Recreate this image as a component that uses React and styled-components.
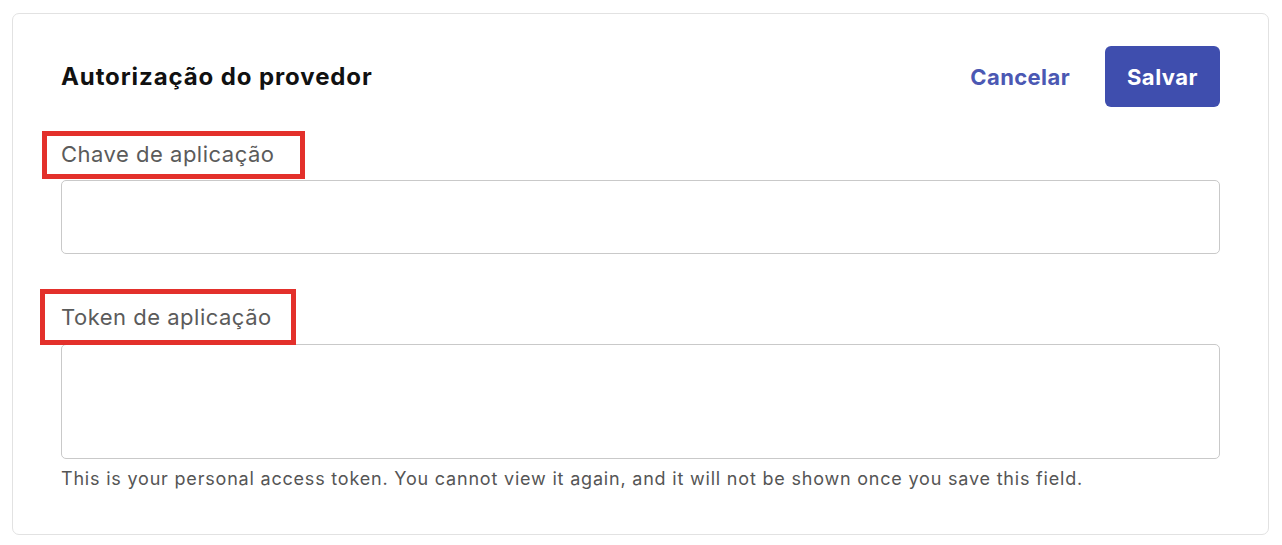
import React from "react";
import styled, { createGlobalStyle } from "styled-components";

const Global = createGlobalStyle`
  html, body { margin: 0; padding: 0; background: #ffffff; }
  body { font-family: Inter, "Liberation Sans", Arial, sans-serif; }
  * { box-sizing: border-box; }
`;

const Page = styled.div`
  padding: 13px 13px 10px 12px;
  width: 1282px;
`;

const Card = styled.section`
  border: 1px solid #e2e2e2;
  border-radius: 7px;
  padding: 32px 48px 46px 48px;
  height: 522px;
`;

const Header = styled.div`
  display: flex;
  align-items: center;
  justify-content: space-between;
`;

const Title = styled.h2`
  margin: 0;
  font-size: 24px;
  font-weight: 700;
  color: #111;
  letter-spacing: 0.9px;
`;

const Actions = styled.div`
  display: flex;
  align-items: center;
  gap: 35px;
`;

const LinkButton = styled.button`
  border: none;
  background: none;
  padding: 0;
  font-family: inherit;
  font-size: 22px;
  font-weight: 700;
  letter-spacing: 0.4px;
  color: #4b58b3;
  cursor: pointer;
`;

const PrimaryButton = styled.button`
  border: none;
  background: #3f4eae;
  color: #fff;
  font-family: inherit;
  font-size: 22px;
  font-weight: 700;
  letter-spacing: 0.5px;
  width: 115px;
  height: 61px;
  border-radius: 6px;
  cursor: pointer;
`;

const Field = styled.div`
  display: flex;
  flex-direction: column;
  margin-top: ${(p) => p.$top}px;
`;

const Label = styled.label`
  position: relative;
  align-self: flex-start;
  font-size: 22px;
  letter-spacing: 0.5px;
  color: #5b5b5b;
  line-height: 24px;
  margin-bottom: ${(p) => p.$gap}px;

  &::after {
    content: "";
    position: absolute;
    left: ${(p) => p.$box.l}px;
    top: ${(p) => p.$box.t}px;
    right: ${(p) => p.$box.r}px;
    bottom: ${(p) => p.$box.b}px;
    border: 5px solid #e3302b;
    pointer-events: none;
  }
`;

const Input = styled.div`
  height: ${(p) => p.$h}px;
  border: 1px solid #c9c9c9;
  border-radius: 5px;
  background: #fff;
`;

const Help = styled.p`
  margin: 9px 0 0 0;
  font-size: 18px;
  line-height: 22px;
  color: #555;
  letter-spacing: 0.8px;
`;

export default function App() {
  return (
    <>
      <Global />
      <Page>
        <Card>
          <Header>
            <Title>Autorização do provedor</Title>
            <Actions>
              <LinkButton>Cancelar</LinkButton>
              <PrimaryButton>Salvar</PrimaryButton>
            </Actions>
          </Header>
          <Field $top={35}>
            <Label $gap={14} $box={{ l: -19, t: -11, r: -30, b: -13 }}>
              Chave de aplicação
            </Label>
            <Input $h={74} />
          </Field>
          <Field $top={51}>
            <Label $gap={15} $box={{ l: -21, t: -16, r: -24, b: -16 }}>
              Token de aplicação
            </Label>
            <Input $h={115} />
            <Help>
              This is your personal access token. You cannot view it again, and it will not be shown once you save this field.
            </Help>
          </Field>
        </Card>
      </Page>
    </>
  );
}
